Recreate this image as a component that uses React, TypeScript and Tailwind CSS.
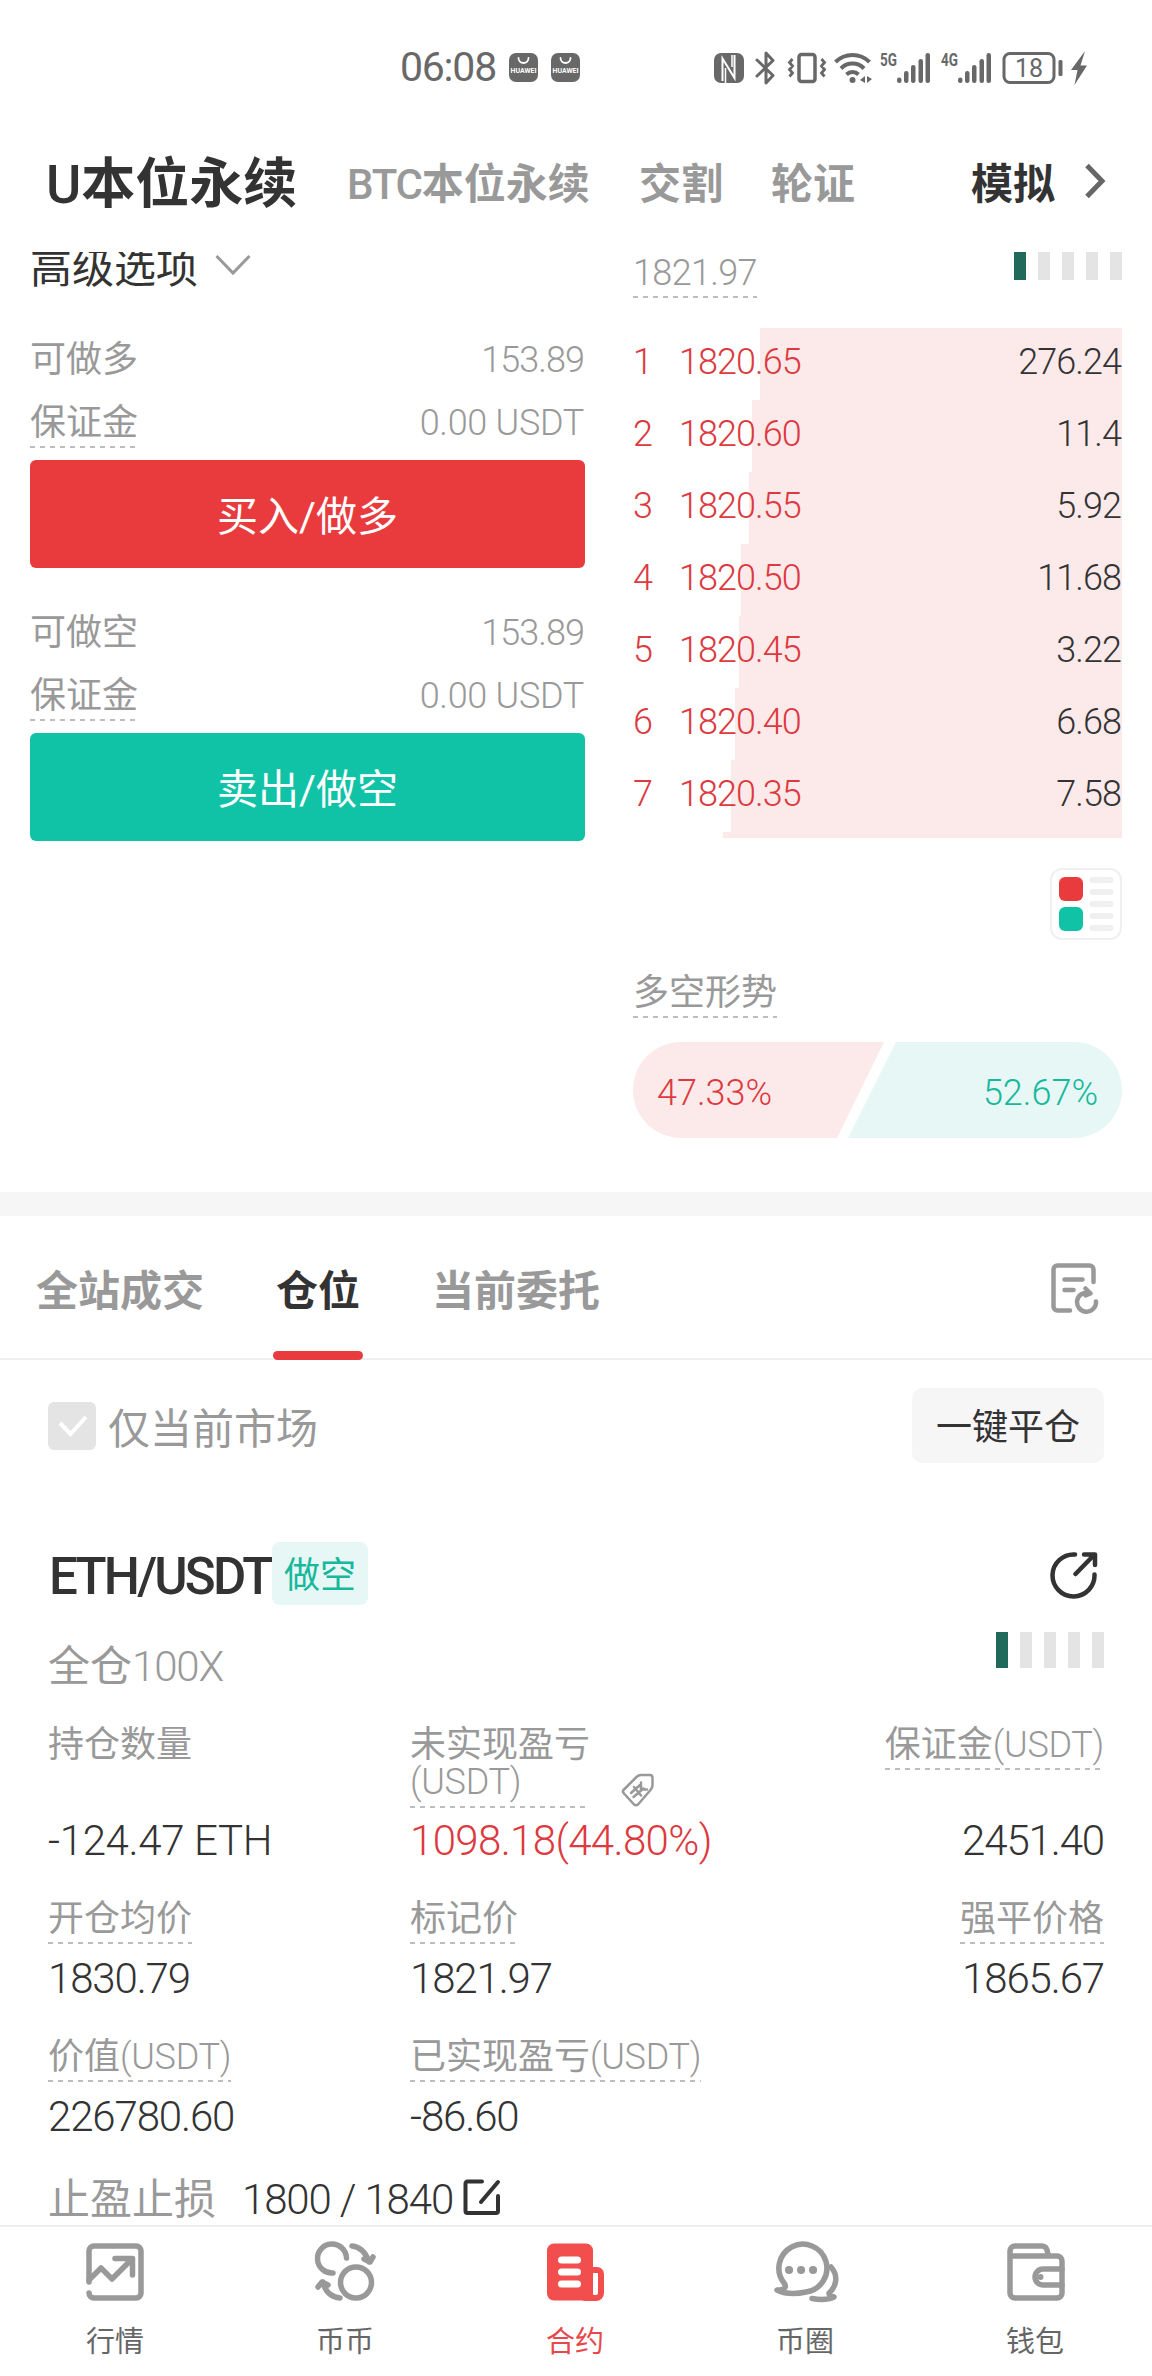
import React from 'react'

const asks = [
  { price: '1820.65', amount: '276.24', depth: 362 },
  { price: '1820.60', amount: '11.4', depth: 370 },
  { price: '1820.55', amount: '5.92', depth: 373 },
  { price: '1820.50', amount: '11.68', depth: 381 },
  { price: '1820.45', amount: '3.22', depth: 383 },
  { price: '1820.40', amount: '6.68', depth: 387 },
  { price: '1820.35', amount: '7.58', depth: 391 },
]

const Num = ({ children, className = '' }: { children: React.ReactNode; className?: string }) => (
  <span className={`tracking-[-0.027em] font-[350] whitespace-pre ${className}`}>{children}</span>
)

const Unit = ({ children, className = '' }: { children: React.ReactNode; className?: string }) => (
  <span className={`tracking-[-0.008em] font-[350] whitespace-pre ${className}`}>{children}</span>
)

// label with the dashed "tap for help" underline
const Hint = ({ children, className = '' }: { children: React.ReactNode; className?: string }) => (
  <span className={`inline-flex flex-col text-[36px] text-[#999] ${className}`}>
    <span className="h-[49px] leading-[53px] whitespace-nowrap">{children}</span>
    <span className="h-[2px] bg-[repeating-linear-gradient(90deg,#bdbdbd_0_5px,transparent_5px_10px)]" />
  </span>
)

const RiskBars = ({ className = '' }: { className?: string }) => (
  <div className={`flex gap-3 ${className}`}>
    <i className="w-3 bg-[#21695a]" />
    <i className="w-3 bg-[#e4e4e4]" />
    <i className="w-3 bg-[#e4e4e4]" />
    <i className="w-3 bg-[#e4e4e4]" />
    <i className="w-3 bg-[#e4e4e4]" />
  </div>
)

const HuaweiIcon = () => (
  <svg width="29" height="29" viewBox="0 0 29 29">
    <rect width="29" height="29" rx="7" fill="#686868" />
    <path d="M9.500 5a5 5 0 0 0 10 0" fill="none" stroke="#fff" strokeWidth="1.800" strokeLinecap="round" />
    <text x="14.500" y="19.500" textAnchor="middle" textLength="26" lengthAdjust="spacingAndGlyphs" fontSize="6.500" fontWeight="700" fill="#fff">HUAWEI</text>
  </svg>
)

const Signal = ({ label, className = '' }: { label: string; className?: string }) => (
  <svg width="51" height="34" viewBox="0 0 51 34" className={`overflow-visible ${className}`} fill="#686868">
    <text x="0" y="15" fontSize="19" fontWeight="700" textLength="17" lengthAdjust="spacingAndGlyphs">{label}</text>
    <rect x="17" y="26.500" width="4.500" height="5.500" rx="2.200" />
    <rect x="24" y="20" width="4.500" height="12" rx="2.200" />
    <rect x="31" y="14" width="4.500" height="18" rx="2.200" />
    <rect x="38.500" y="8" width="4.500" height="24" rx="2.200" />
    <rect x="45.500" y="2" width="4.500" height="30" rx="2.200" />
  </svg>
)

const StatusBar = () => (
  <div className="h-[135px] pl-[400px] pr-[64px] flex items-center text-[#686868]">
    <span className="w-[109px] text-[41px] tracking-[-0.03em]">06:08</span>
    <HuaweiIcon />
    <div className="w-[13px]" />
    <HuaweiIcon />
    <div className="ml-[134px] flex items-center">
      <svg width="30" height="30" viewBox="0 0 30 30">
        <rect width="30" height="30" rx="7" fill="#686868" />
        <path d="M8.500 28V5.500L20.500 25V2" fill="none" stroke="#fff" strokeWidth="2" />
        <path d="M11.500 30V15M18 2v12" fill="none" stroke="#fff" strokeWidth="1.500" />
      </svg>
      <svg width="22" height="34" viewBox="0 0 22 34" className="ml-[11px]" fill="none" stroke="#686868" strokeWidth="3" strokeLinecap="round" strokeLinejoin="round">
        <path d="M2 9l16 15.500L11 32V2l7 7.500L2 25" />
      </svg>
      <svg width="40" height="34" viewBox="0 0 40 34" className="ml-[10px]" fill="none" stroke="#686868" strokeWidth="3">
        <rect x="12" y="3.500" width="16" height="27" rx="2.500" strokeWidth="3.500" />
        <path d="M5.500 8l-3 3.500 3 3.500-3 3.500 3 3.500-3 3.500M34.500 8l3 3.500-3 3.500 3 3.500-3 3.500 3 3.500" strokeWidth="2.800" />
      </svg>
      <svg width="38" height="34" viewBox="0 0 38 34" className="ml-[7px]" fill="none" stroke="#686868" strokeWidth="4">
        <path d="M1.500 11a24 24 0 0 1 34 0" />
        <path d="M7 17.500a16 16 0 0 1 23 0" />
        <path d="M12.500 23.500a8.500 8.500 0 0 1 12 0" />
        <circle cx="18.500" cy="29" r="3" fill="#686868" stroke="none" />
        <path d="M31 25v7l-5-3zM33 25v7l5-4z" fill="#686868" stroke="none" />
      </svg>
      <Signal label="5G" className="ml-[8px]" />
      <Signal label="4G" className="ml-[10px]" />
      <svg width="62" height="34" viewBox="0 0 62 34" className="ml-[10px]">
        <rect x="2" y="2.500" width="50" height="29" rx="6" fill="none" stroke="#686868" strokeWidth="3" />
        <rect x="56.500" y="9" width="4" height="16" rx="1.500" fill="#686868" />
        <text x="27" y="25.500" textAnchor="middle" fontSize="25" fill="#686868">18</text>
      </svg>
      <svg width="16" height="34" viewBox="0 0 16 34" className="ml-[7px]" fill="#686868">
        <path d="M14 0L0 19h6.500L3.500 34 16 14.500H9.500z" />
      </svg>
    </div>
  </div>
)

const Header = () => (
  <div className="h-[117px] pt-[14px] pl-[46px] pr-[46px] flex text-[42px] leading-[71px] font-bold text-[#999]">
    <div className="w-[301px] text-[54px] text-[#333] whitespace-nowrap"><span className="font-medium">U</span>本位永续</div>
    <div className="w-[292px] whitespace-nowrap"><span className="font-medium tracking-[-0.03em]">BTC</span>本位永续</div>
    <div className="w-[132px]">交割</div>
    <div>轮证</div>
    <div className="ml-auto text-[#333]">模拟</div>
    <svg width="22" height="36" viewBox="0 0 22 36" className="mt-[14px] ml-[29px]" fill="none" stroke="#666" strokeWidth="5">
      <path d="M3 2.500L18 18 3 33.500" />
    </svg>
  </div>
)

const OrderSide = ({ label, color, action }: { label: string; color: string; action: string }) => (
  <div className="text-[36px] text-[#999] mb-[33px]">
    <div className="flex justify-between h-[64px] leading-[64px]">
      <span>{label}</span>
      <Num className="pr-[1px]">153.89</Num>
    </div>
    <div className="flex justify-between h-[68px] pt-[5px]">
      <Hint>保证金</Hint>
      <Unit className="leading-[53px] pr-[1px]">0.00 USDT</Unit>
    </div>
    <button className={`w-full h-[108px] rounded-md text-white text-[41px] block leading-[115px] ${color}`}>{action}</button>
  </div>
)

const TradeForm = () => (
  <div className="w-[555px]">
    {/* first row is scrolled partly under the header */}
    <div className="h-[76px] flex text-[42px] text-[#333]">
      <span className="-mt-[15px] leading-[63px]">高级选项</span>
      <svg width="36" height="22" viewBox="0 0 36 22" className="mt-[2px] ml-[17px]" fill="none" stroke="#999" strokeWidth="3">
        <path d="M1.500 2L18 19 34.500 2" />
      </svg>
    </div>
    <OrderSide label="可做多" color="bg-[#e93b3d]" action="买入/做多" />
    <OrderSide label="可做空" color="bg-[#11c3a6]" action="卖出/做空" />
  </div>
)

const OrderBook = () => (
  <div className="w-[489px]">
    <div className="flex justify-between h-[76px]">
      <Hint className="-mt-[5px]"><Num className="tracking-[-0.018em]!">1821.97</Num></Hint>
      <RiskBars className="h-[28px]" />
    </div>
    {asks.map((ask, i) => (
      <div key={ask.price} className="relative h-[72px] flex leading-[69px] text-[36px] text-[#dc3a40]">
        <div className="absolute right-0 top-0 h-full bg-[#fceaea]" style={{ width: ask.depth }} />
        <Num className="relative w-[46px]">{i + 1}</Num>
        <Num className="relative">{ask.price}</Num>
        <Num className="relative ml-auto pr-[1px] text-[#333]">{ask.amount}</Num>
      </div>
    ))}
    <div className="h-[6px] w-[399px] ml-auto bg-[#fceaea]" />
    <svg width="72" height="72" viewBox="0 0 72 72" className="mt-[30px] ml-auto">
      <rect x="1" y="1" width="70" height="70" rx="11" fill="#fff" stroke="#f0f0f0" strokeWidth="2" />
      <rect x="9" y="9" width="24" height="24" rx="6" fill="#e93b3d" />
      <rect x="9" y="39" width="24" height="24" rx="6" fill="#11c3a6" />
      <path d="M42.500 12h18M42.500 24h18M42.500 36h18M42.500 48h18M42.500 60h18" stroke="#f0f0f0" strokeWidth="6" strokeLinecap="round" />
    </svg>
    <div className="flex mt-[27px]">
      <Hint>多空形势</Hint>
    </div>
    <div className="relative mt-[24px] h-[96px] px-[24px] flex items-center justify-between text-[36px]">
      <svg width="489" height="96" viewBox="0 0 489 96" className="absolute inset-0">
        <path d="M48 0H251L204 96H48A48 48 0 0 1 48 0z" fill="#fceaea" />
        <path d="M263 0H441A48 48 0 0 1 441 96H215z" fill="#e6f7f5" />
      </svg>
      <Unit className="relative text-[#dc3a40] pt-[5px] tracking-normal!">47.33%</Unit>
      <Unit className="relative text-[#17b89c] pt-[5px] tracking-normal!">52.67%</Unit>
    </div>
  </div>
)

const PositionTabs = () => (
  <div className="h-[144px] pl-[36px] pr-[52px] flex border-b-2 border-[#efefef] text-[42px] font-bold text-[#999] leading-[152px]">
    <div className="w-[237px]">全站成交</div>
    <div className="relative w-[90px] mr-[69px] text-center text-[#333]">
      仓位
      <div className="absolute left-0 -bottom-[2px] w-[90px] h-[9px] rounded-full bg-[#e93b3d]" />
    </div>
    <div>当前委托</div>
    <svg width="50" height="52" viewBox="0 0 50 52" className="ml-auto mt-[46px]" fill="none" stroke="#999" strokeWidth="4.500" strokeLinecap="round" strokeLinejoin="round">
      <path d="M43.500 20V7.500a4 4 0 0 0-4-4h-32a4 4 0 0 0-4 4v37a4 4 0 0 0 4 4H20M14.500 17.500h18M14.500 28h9" />
      <path d="M46 39.500a9.500 9.500 0 1 1-7-8.500M35.500 26.500l5 5-5 2" />
    </svg>
  </div>
)

const Stat = ({ label, value, className = '' }: { label: React.ReactNode; value: string; className?: string }) => (
  <div className={`flex flex-col items-start h-[138px] ${className}`}>
    <Hint>{label}</Hint>
    <Num className="mt-[8px] text-[42px] leading-[54px] text-[#333]">{value}</Num>
  </div>
)

const Position = () => (
  <div className="px-12 h-[762px]">
    <div className="flex items-start pt-[79px]">
      <span className="text-[51px] font-medium leading-[69px] w-[224px] pl-[1px] tracking-[-0.055em] text-[#333]">ETH/USDT</span>
      <span className="w-[96px] h-[63px] leading-[68px] text-center rounded-lg bg-[#e6f7f5] text-[36px] text-[#17b89c]">做空</span>
      <svg width="48" height="48" viewBox="0 0 48 48" className="ml-auto mr-[6px] mt-[9px]" fill="none" stroke="#333" strokeWidth="4.500" strokeLinecap="round" strokeLinejoin="round">
        <path d="M25 3.500A21 21 0 1 0 44.500 23.500M25.500 23L44 4M34 3.500h11V14" />
      </svg>
    </div>
    <div className="flex justify-between h-[108px] pt-[21px] text-[42px] leading-[69px] text-[#999]">
      <span>全仓<Num>100X</Num></span>
      <RiskBars className="h-[36px]" />
    </div>
    <div className="grid grid-cols-[362px_1fr_auto] text-[36px] text-[#999]">
      <div className="h-[174px] flex flex-col">
        <span className="leading-[53px]">持仓数量</span>
        <Unit className="mt-[42px] text-[42px] leading-[54px] text-[#333]">-124.47 ETH</Unit>
      </div>
      <div className="flex flex-col items-start">
        <div className="flex items-end h-[89px]">
          <div className="w-[177px] whitespace-nowrap">
            <div className="h-[50px] leading-[53px]">未实现盈亏</div>
            <Unit className="block h-[37px] leading-[27px]">(USDT)</Unit>
            <div className="h-[2px] bg-[repeating-linear-gradient(90deg,#bdbdbd_0_5px,transparent_5px_10px)]" />
          </div>
          <svg width="34" height="34" viewBox="0 0 34 34" className="ml-[34px] mb-[1px]" fill="none" stroke="#999" strokeWidth="2.500" strokeLinecap="round" strokeLinejoin="round">
            <path d="M2.500 17L15.500 4q2-2 4.500-2h9q2.500 0 2.500 3v7q0 3-2 5L17 31.500q-2 1.500-4 0l-10-11q-2-2-.5-3.500z" />
            <path d="M13 14l7 8.500M20 9.500v7h6M10 20l9-8M12.500 24l10-8.500" />
          </svg>
        </div>
        <Unit className="mt-[6px] text-[42px] leading-[54px] text-[#dc3a40] tracking-[-0.015em]!">1098.18(44.80%)</Unit>
      </div>
      <div className="flex flex-col items-end">
        <Hint>保证金<Unit>(USDT)</Unit></Hint>
        <Num className="mt-[44px] text-[42px] leading-[54px] text-[#333]">2451.40</Num>
      </div>
      <Stat label="开仓均价" value="1830.79" />
      <Stat label="标记价" value="1821.97" />
      <Stat label="强平价格" value="1865.67" className="items-end!" />
      <Stat label={<>价值<Unit>(USDT)</Unit></>} value="226780.60" />
      <Stat label={<>已实现盈亏<Unit>(USDT)</Unit></>} value="-86.60" />
    </div>
    <div className="flex items-center h-[62px] text-[42px] leading-[62px] text-[#999]">
      <span className="w-[194px]">止盈止损</span>
      <Num className="text-[#333] -mt-[1px]">1800 / 1840</Num>
      <svg width="38" height="38" viewBox="0 0 38 38" className="ml-[10px] -mt-[6px]" fill="none" stroke="#333" strokeWidth="4" strokeLinecap="round" strokeLinejoin="round">
        <path d="M19 3.500H4.500a2 2 0 0 0-2 2V33a2 2 0 0 0 2 2H33a2 2 0 0 0 2-2V18M18 24L35 4" />
      </svg>
    </div>
  </div>
)

const navItems = [
  {
    label: '行情',
    icon: (
      <>
        <path d="M4 40V9a5 5 0 0 1 5-5h42a5 5 0 0 1 5 5v42a5 5 0 0 1-5 5H9a5 5 0 0 1-5-5" />
        <path d="M4 38l12-12 11 11 19-19M30 16.500h17.500V33" />
      </>
    ),
  },
  {
    label: '币币',
    icon: (
      <>
        <path d="M18 31A14.500 14.500 0 1 1 31.500 16" />
        <circle cx="41" cy="40.500" r="15.500" />
        <path d="M37 4c9 1 14 7 17 16M49 17l6 3 3-5M25 56c-9-1-15-7-17-16M13 43l-6-3-4 5" />
      </>
    ),
  },
  {
    label: '合约',
    active: true,
    icon: (
      <>
        <path d="M42 28h10a4 4 0 0 1 4 4v19a5 5 0 0 1-5 5H40" strokeWidth="6" />
        <path d="M9 1.500h32a7 7 0 0 1 7 7V52l3 6.500H9a7 7 0 0 1-7-7v-43a7 7 0 0 1 7-7z" fill="#f24e4e" stroke="none" />
        <path d="M16.500 18h16M16.500 30h16M16.500 42h16" stroke="#fff" strokeWidth="7" />
        <path d="M50.500 34v15" stroke="#fff" strokeWidth="5" />
      </>
    ),
  },
  {
    label: '币圈',
    icon: (
      <>
        <path d="M2 48c8 0 10-3 7-7A24 24 0 1 1 31 50C20 52.500 9 51.500 2 48z" />
        <path d="M56 25c8 9 5 20-2 26 0 4 3 3 5 4-6 3-14 3-22 1.500" />
        <path d="M14 28h.1M26 28h.1M38 28h.1" strokeWidth="8" />
      </>
    ),
  },
  {
    label: '钱包',
    icon: (
      <>
        <path d="M6 14h46a5 5 0 0 1 5 5v32a5 5 0 0 1-5 5H10a5 5 0 0 1-5-5V9a5 5 0 0 1 5-5h27q5 0 6 8" />
        <path d="M57 27H38a7.500 7.500 0 0 0 0 16h19" />
        <circle cx="35.500" cy="35" r="3" fill="#999" stroke="none" />
      </>
    ),
  },
]

const BottomNav = () => (
  <div className="h-[152px] bg-white border-t-2 border-[#efefef] grid grid-cols-5 pt-[15px] pr-[2px]">
    {navItems.map((item) => (
      <div key={item.label} className={`flex flex-col items-center text-[29px] ${item.active ? 'text-[#e8484c]' : 'text-[#666]'}`}>
        <svg width="60" height="60" viewBox="0 0 60 60" className="overflow-visible" fill="none" stroke={item.active ? '#f24e4e' : '#999'} strokeWidth="5.500" strokeLinecap="round" strokeLinejoin="round">
          {item.icon}
        </svg>
        <span className="mt-[20px] leading-[40px]">{item.label}</span>
      </div>
    ))}
  </div>
)

const App = () => {
  return (
    <div className="w-[1152px] h-[2376px] overflow-hidden bg-white font-['Roboto','Noto_Sans_CJK_SC',sans-serif]">
      <StatusBar />
      <Header />
      <div className="h-[940px] overflow-hidden pl-[30px] pr-[30px] flex justify-between">
        <TradeForm />
        <OrderBook />
      </div>
      <div className="h-[24px] bg-[#f6f6f6]" />
      <PositionTabs />
      <div className="h-[103px] pt-[28px] px-12 flex items-start">
        <div className="mt-[14px] w-12 h-12 rounded-md bg-[#e4e4e4]">
          <svg width="48" height="48" viewBox="0 0 48 48" fill="none" stroke="#fff" strokeWidth="4">
            <path d="M12 21l10.500 11L38 15" />
          </svg>
        </div>
        <span className="ml-[12px] text-[42px] leading-[84px] text-[#999]">仅当前市场</span>
        <button className="ml-auto w-[192px] h-[75px] rounded-[10px] bg-[#f6f6f6] text-[36px] leading-[81px] text-[#333]">一键平仓</button>
      </div>
      <Position />
      <BottomNav />
    </div>
  )
}

export default App
